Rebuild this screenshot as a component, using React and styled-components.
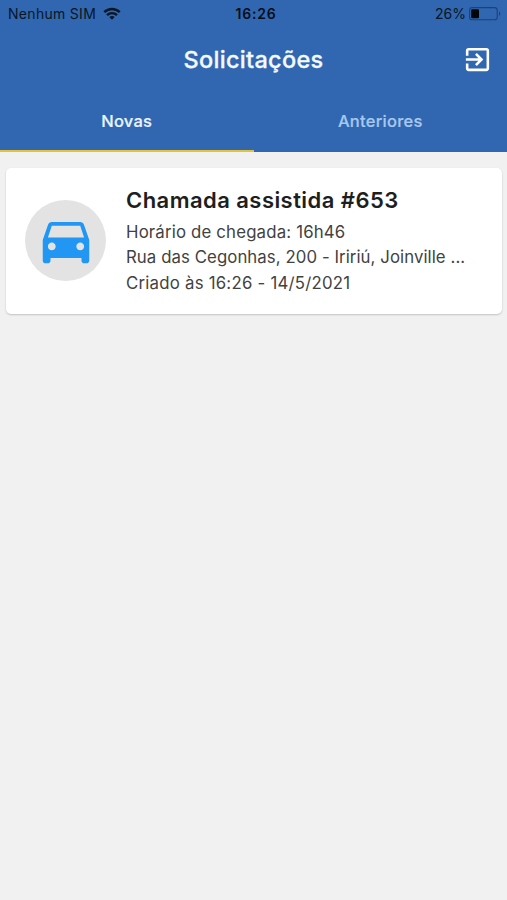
import React from "react";
import styled, { createGlobalStyle } from "styled-components";

const GlobalStyle = createGlobalStyle`
  * { box-sizing: border-box; }
  html, body { margin: 0; background: #f1f1f1; }
  body { font-family: Inter, "Liberation Sans", sans-serif; }
`;

const Screen = styled.div`
  width: 100%;
  min-height: 900px;
  background: #f1f1f1;
`;

const Header = styled.header`
  height: 152px;
  background: #3067b0;
  display: flex;
  flex-direction: column;
`;

const StatusBar = styled.div`
  height: 27px;
  padding: 0 5px 0 8px;
  display: grid;
  grid-template-columns: 1fr auto 1fr;
  align-items: center;
  color: #0a1626;
  font-size: 14px;
  line-height: 27px;
  white-space: nowrap;
`;

const Carrier = styled.div`
  display: flex;
  align-items: center;
  gap: 7px;
  letter-spacing: 0.3px;
`;

const Clock = styled.div`
  padding-left: 2px;
  font-weight: 600;
  letter-spacing: 0.8px;
  color: #060d18;
`;

const Power = styled.div`
  display: flex;
  align-items: center;
  justify-content: flex-end;
  gap: 3px;
`;

const TitleBar = styled.div`
  height: 65px;
  padding: 0 14px;
  display: grid;
  grid-template-columns: 31px 1fr 31px;
  align-items: center;
`;

const Title = styled.h1`
  grid-column: 2;
  margin: 0;
  color: #f4f9ff;
  font-size: 23.5px;
  font-weight: 500;
  letter-spacing: 0.3px;
  -webkit-text-stroke: 0.3px #f4f9ff;
  text-align: center;
`;

const ExitButton = styled.button`
  width: 31px;
  height: 31px;
  padding: 0;
  border: 0;
  background: none;
  color: #fff;
  svg { display: block; }
`;

const Tabs = styled.nav`
  height: 60px;
  display: grid;
  grid-template-columns: 1fr 1fr;
`;

const Tab = styled.button`
  padding: 0;
  border: 0;
  border-bottom: 2px solid ${(p) => (p.$active ? "#e3c33c" : "transparent")};
  background: none;
  color: ${(p) => (p.$active ? "#e9f4ff" : "#a9c8f0")};
  font: 500 16.5px/58px Inter, sans-serif;
  letter-spacing: 0.25px;
  -webkit-text-stroke: 0.2px currentColor;
`;

const Card = styled.article`
  height: 145.5px;
  margin: 16px 5px 0 6px;
  padding: 0 20px 0 19px;
  display: flex;
  align-items: center;
  gap: 20px;
  background: #fff;
  border-radius: 5px;
  box-shadow: 0 1px 2px rgba(0, 0, 0, 0.2);
`;

const Avatar = styled.div`
  flex: none;
  width: 81px;
  height: 81px;
  margin-bottom: 1px;
  border-radius: 50%;
  background: #e3e3e3;
  color: #2196f3;
  display: flex;
  align-items: center;
  justify-content: center;
`;

const Details = styled.div`
  min-width: 0;
  flex: 1;
  padding-top: 1px;
`;

const CardTitle = styled.h2`
  margin: 0 0 6px;
  color: #1e1e1e;
  font-size: 22px;
  line-height: 28px;
  font-weight: 600;
  letter-spacing: 0.45px;
  white-space: nowrap;
`;

const Line = styled.p`
  margin: 0;
  color: #424242;
  font-size: 16.8px;
  line-height: 25.7px;
  letter-spacing: ${(p) => p.$tracking};
  white-space: nowrap;
`;

const WifiIcon = () => (
  <svg width="18" height="14" viewBox="0 0 18 14" fill="none" stroke="#0a1626" strokeWidth="2.4">
    <path d="M1.2 5.2C5.6 .9 12.4 .9 16.8 5.2" />
    <path d="M4 8.1C6.8 5.4 11.2 5.4 14 8.1" />
    <path d="M6.3 10.1C7.8 8.7 10.2 8.7 11.7 10.1L9 12.8Z" fill="#0a1626" stroke="none" />
  </svg>
);

const BatteryIcon = () => (
  <svg width="33" height="14" viewBox="0 0 33 14">
    <rect x=".6" y=".6" width="27.6" height="12.2" rx="2.6" fill="none" stroke="#1d4277" strokeWidth="1.1" />
    <rect x="2.2" y="2.2" width="7.8" height="9" rx="1" fill="#030609" />
    <path d="M30 4.6c1.7.5 1.7 3.7 0 4.2z" fill="#1d4277" />
  </svg>
);

const ExitIcon = () => (
  <svg width="31" height="31" viewBox="0 0 24 24" fill="currentColor">
    <path d="M10.09 15.59L11.5 17l5-5-5-5-1.41 1.41L12.67 11H3v2h9.67l-2.58 2.59zM19 3H5c-1.11 0-2 .9-2 2v4h2V5h14v14H5v-4H3v4c0 1.1.89 2 2 2h14c1.1 0 2-.9 2-2V5c0-1.1-.9-2-2-2z" />
  </svg>
);

const CarIcon = () => (
  <svg width="62" height="62" viewBox="0 0 24 24" fill="currentColor">
    <path d="M18.92 6.01C18.72 5.42 18.16 5 17.5 5h-11c-.66 0-1.21.42-1.42 1.01L3 12v8c0 .55.45 1 1 1h1c.55 0 1-.45 1-1v-1h12v1c0 .55.45 1 1 1h1c.55 0 1-.45 1-1v-8l-2.08-5.99zM6.5 16c-.83 0-1.5-.67-1.5-1.5S5.67 13 6.5 13s1.5.67 1.5 1.5S7.33 16 6.5 16zm11 0c-.83 0-1.5-.67-1.5-1.5s.67-1.5 1.5-1.5 1.5.67 1.5 1.5-.67 1.5-1.5 1.5zM5 11l1.5-4.5h11L19 11H5z" />
  </svg>
);

export default function App() {
  return (
    <Screen>
      <GlobalStyle />
      <Header>
        <StatusBar>
          <Carrier>Nenhum SIM <WifiIcon /></Carrier>
          <Clock>16:26</Clock>
          <Power>26% <BatteryIcon /></Power>
        </StatusBar>
        <TitleBar>
          <Title>Solicitações</Title>
          <ExitButton aria-label="Sair"><ExitIcon /></ExitButton>
        </TitleBar>
        <Tabs>
          <Tab $active>Novas</Tab>
          <Tab>Anteriores</Tab>
        </Tabs>
      </Header>
      <Card>
        <Avatar><CarIcon /></Avatar>
        <Details>
          <CardTitle>Chamada assistida #653</CardTitle>
          <Line $tracking="0.17px">Horário de chegada: 16h46</Line>
          <Line $tracking="0.07px">Rua das Cegonhas, 200 - Iririú, Joinville ...</Line>
          <Line $tracking="0.23px">Criado às 16:26 - 14/5/2021</Line>
        </Details>
      </Card>
    </Screen>
  );
}
